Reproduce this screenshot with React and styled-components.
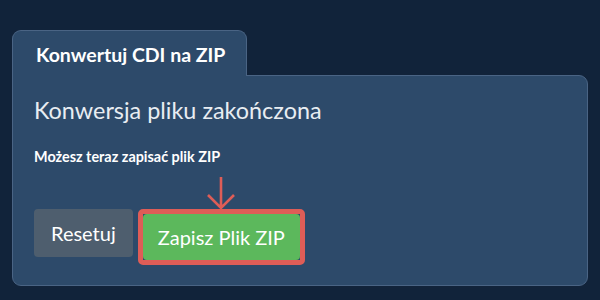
import React from 'react'
import styled, { createGlobalStyle } from 'styled-components'

const GlobalStyle = createGlobalStyle`
	html, body {
		margin: 0;
		background: #11233a;
		font-family: Lato, 'Noto Sans', sans-serif;
	}
`

const Page = styled.div`
	width: 600px;
	height: 300px;
	box-sizing: border-box;
	padding: 30px 12px 0 12px;
	background: #11233a;
`

const Tab = styled.div`
	position: relative;
	z-index: 1;
	width: 235px;
	height: 46px;
	box-sizing: border-box;
	margin-bottom: -1px;
	padding: 12px 0 0 23px;
	background: #2d4a6a;
	border: 1px solid #4a6484;
	border-bottom: none;
	border-radius: 9px 9px 0 0;
	color: #ffffff;
	font-size: 19.5px;
	font-weight: 700;
	line-height: 24px;
`

const Panel = styled.div`
	height: 211px;
	box-sizing: border-box;
	padding: 19px 21px 0 21px;
	background: #2d4a6a;
	border: 1px solid #4a6484;
	border-radius: 0 9px 9px 9px;
	color: #e8edf2;
`

const Heading = styled.h2`
	margin: 0;
	font-size: 23.4px;
	font-weight: 400;
	line-height: 30px;
`

const Note = styled.p`
	margin: 23px 0 0 0;
	color: #ffffff;
	font-size: 14.4px;
	font-weight: 700;
	line-height: 18px;
`

const Actions = styled.div`
	display: flex;
	align-items: flex-start;
	gap: 5px;
	margin-top: 43px;
`

const Button = styled.button`
	box-sizing: border-box;
	height: ${p => (p.$tall ? '46px' : '48px')};
	padding: 0 ${p => p.$pad}px;
	border: none;
	border-radius: 4px;
	background: ${p => p.$bg};
	color: #ffffff;
	font-family: inherit;
	font-size: 20px;
	font-weight: 400;
	cursor: pointer;
`

const Highlight = styled.div`
	position: relative;
	display: flex;
	border: 5px solid #de5d57;
	border-radius: 5px;
`

const Arrow = styled.svg`
	position: absolute;
	left: 50%;
	bottom: 100%;
	margin-left: -15px;
	margin-bottom: 4px;
`

export default function App() {
	return (
		<>
			<GlobalStyle />
			<Page>
				<Tab>Konwertuj CDI na ZIP</Tab>
				<Panel>
					<Heading>Konwersja pliku zakończona</Heading>
					<Note>Możesz teraz zapisać plik ZIP</Note>
					<Actions>
						<Button $bg="#4e5e6e" $pad={17}>Resetuj</Button>
						<Highlight>
							<Arrow width="30" height="34" viewBox="0 0 30 34">
								<path
									d="M15 1 V32 M2 19 L15 32 L28 19"
									fill="none"
									stroke="#de5d57"
									strokeWidth="2.6"
								/>
							</Arrow>
							<Button $bg="#5cb85c" $pad={15} $tall>Zapisz Plik ZIP</Button>
						</Highlight>
					</Actions>
				</Panel>
			</Page>
		</>
	)
}
